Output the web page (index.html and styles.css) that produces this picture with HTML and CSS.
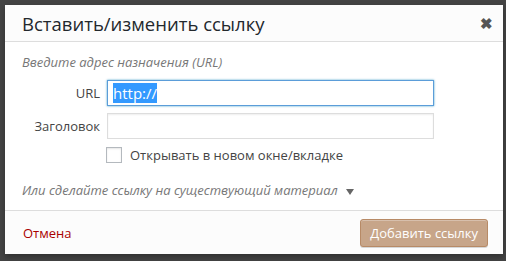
FILE: index.html
```html
<!DOCTYPE html>
<html lang="ru">
<head>
  <meta charset="UTF-8" />
  <title>Вставить/изменить ссылку</title>
  <link rel="stylesheet" href="styles.css">
</head>
<body>
  <div class="dialog">
    <div class="dialog-header">
      <h1 class="dialog-title">Вставить/изменить ссылку</h1>
      <span class="dialog-close">&#x2716;</span>
    </div>
    <div class="dialog-body">
      <p class="howto">Введите адрес назначения (URL)</p>
      <div class="field-row">
        <label class="field-label">URL</label>
        <div class="field-input is-focused"><span class="selected">http://</span></div>
      </div>
      <div class="field-row">
        <label class="field-label">Заголовок</label>
        <div class="field-input"></div>
      </div>
      <div class="check-row">
        <span class="checkbox"></span>
        <span class="check-label">Открывать в новом окне/вкладке</span>
      </div>
      <p class="howto toggle">Или сделайте ссылку на существующий материал <span class="arrow"></span></p>
    </div>
    <div class="dialog-footer">
      <a href="#" class="cancel">Отмена</a>
      <button class="button-primary">Добавить ссылку</button>
    </div>
  </div>
</body>
</html>
```

FILE: styles.css
```css
* {
  margin: 0;
  padding: 0;
  box-sizing: border-box;
}

html, body {
  height: 100%;
  overflow: hidden;
  font-family: 'Open Sans', sans-serif;
  background: #444;
  color: #444;
}

body {
  padding: 5px;
}

.dialog {
  width: 498px;
  height: 249px;
  background: #fff;
  box-shadow: 0 3px 6px rgba(0, 0, 0, 0.3);
  display: flex;
  flex-direction: column;
}

.dialog-header {
  height: 37px;
  background: #fcfcfc;
  border-bottom: 1px solid #ddd;
  display: flex;
  justify-content: space-between;
  align-items: center;
  padding: 0 10px 0 17px;
}

.dialog-title {
  font-size: 18.5px;
  font-weight: 400;
  color: #23282d;
}

.dialog-close {
  font-size: 15px;
  font-weight: bold;
  color: #555;
}

.dialog-body {
  flex: 1;
  padding: 11px 17px 0;
}

.howto {
  font-size: 13px;
  font-style: italic;
  color: #777;
  line-height: 18px;
  margin-bottom: 9px;
}

.field-row {
  display: flex;
  align-items: center;
  gap: 7px;
  margin-bottom: 7px;
}

.field-label {
  width: 78px;
  text-align: right;
  font-size: 13px;
  color: #444;
}

.field-input {
  width: 327px;
  height: 26px;
  border: 1px solid #ddd;
  box-shadow: inset 0 1px 2px rgba(0, 0, 0, 0.07);
  padding: 2px 5px;
  font-size: 15px;
  line-height: 20px;
  color: #333;
}

.field-input.is-focused {
  border-color: #5b9dd9;
  box-shadow: 0 0 2px rgba(30, 140, 190, 0.8);
}

.selected {
  background: #3399ff;
  color: #fff;
}

.check-row {
  display: flex;
  align-items: center;
  gap: 8px;
  margin-left: 84px;
  margin-bottom: 17px;
}

.checkbox {
  width: 16px;
  height: 16px;
  border: 1px solid #b4b9be;
  background: #fff;
  box-shadow: inset 0 1px 2px rgba(0, 0, 0, 0.1);
}

.check-label {
  font-size: 13px;
  color: #444;
}

.toggle {
  margin: 0;
}

.arrow {
  display: inline-block;
  margin-left: 5px;
  border-left: 4px solid transparent;
  border-right: 4px solid transparent;
  border-top: 6px solid #666;
  vertical-align: middle;
}

.dialog-footer {
  height: 44px;
  background: #fcfcfc;
  border-top: 1px solid #ddd;
  display: flex;
  justify-content: space-between;
  align-items: center;
  padding: 0 15px 0 18px;
}

.cancel {
  color: #a00;
  text-decoration: none;
  font-size: 13px;
}

.button-primary {
  font-family: 'Open Sans', sans-serif;
  font-size: 13px;
  color: #fff;
  background: #c7a589;
  border: 1px solid #b78a66;
  border-radius: 3px;
  box-shadow: inset 0 1px 0 #d7bfac, 0 1px 0 rgba(0, 0, 0, 0.15);
  height: 28px;
  padding: 0 9px;
}
```
